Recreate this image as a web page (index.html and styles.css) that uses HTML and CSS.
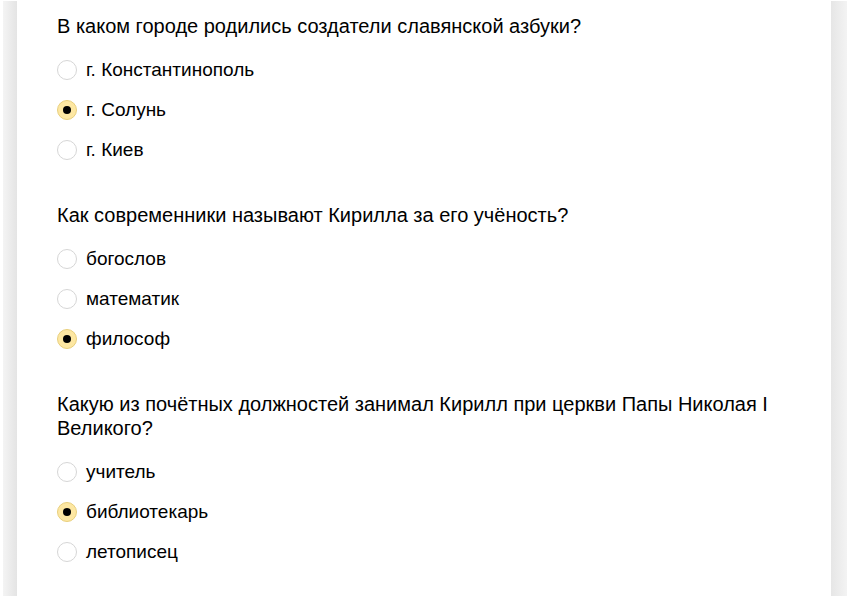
FILE: index.html
```html
<!DOCTYPE html>
<html lang="ru">
<head>
<meta charset="utf-8">
<link rel="stylesheet" href="styles.css">
</head>
<body>
<div class="page">
  <div class="shade shade-left"></div>
  <div class="card">
    <div class="question">
      <div class="q-title">В каком городе родились создатели славянской азбуки?</div>
      <div class="option"><span class="radio"></span><span class="label">г. Константинополь</span></div>
      <div class="option"><span class="radio checked"></span><span class="label">г. Солунь</span></div>
      <div class="option"><span class="radio"></span><span class="label">г. Киев</span></div>
    </div>
    <div class="question">
      <div class="q-title">Как современники называют Кирилла за его учёность?</div>
      <div class="option"><span class="radio"></span><span class="label">богослов</span></div>
      <div class="option"><span class="radio"></span><span class="label">математик</span></div>
      <div class="option"><span class="radio checked"></span><span class="label">философ</span></div>
    </div>
    <div class="question">
      <div class="q-title">Какую из почётных должностей занимал Кирилл при церкви Папы Николая I Великого?</div>
      <div class="option"><span class="radio"></span><span class="label">учитель</span></div>
      <div class="option"><span class="radio checked"></span><span class="label">библиотекарь</span></div>
      <div class="option"><span class="radio"></span><span class="label">летописец</span></div>
    </div>
  </div>
  <div class="shade shade-right"></div>
</div>
</body>
</html>
```

FILE: styles.css
```css
html, body {
  margin: 0;
  padding: 0;
  background: #ffffff;
}
body {
  font-family: "Liberation Sans", Arial, sans-serif;
  color: #000;
}
.page {
  display: flex;
  height: 596px;
  padding: 1px 3px 0 3px;
  box-sizing: border-box;
  overflow: hidden;
}
.shade {
  flex: none;
}
.shade-left {
  width: 14px;
  background: linear-gradient(to right, #f4f4f4, #e4e4e4);
}
.shade-right {
  width: 16px;
  background: linear-gradient(to right, #e6e6e6, #f3f3f3);
}
.card {
  flex: 1;
  background: #ffffff;
  padding: 13px 40px 0 40px;
}
.question {
  margin-bottom: 33px;
}
.q-title {
  font-size: 20px;
  line-height: 24px;
  margin-bottom: 12px;
}
.option {
  display: flex;
  align-items: center;
  height: 40px;
  font-size: 19px;
}
.radio {
  box-sizing: border-box;
  width: 20px;
  height: 20px;
  border-radius: 50%;
  border: 1px solid #d6d6d6;
  background: #fff;
  margin-right: 9px;
  flex: none;
  display: flex;
  align-items: center;
  justify-content: center;
}
.radio.checked {
  background: #fde7a2;
  border-color: #e8cf7c;
}
.radio.checked::after {
  content: "";
  width: 8px;
  height: 8px;
  border-radius: 50%;
  background: #000;
}
```
